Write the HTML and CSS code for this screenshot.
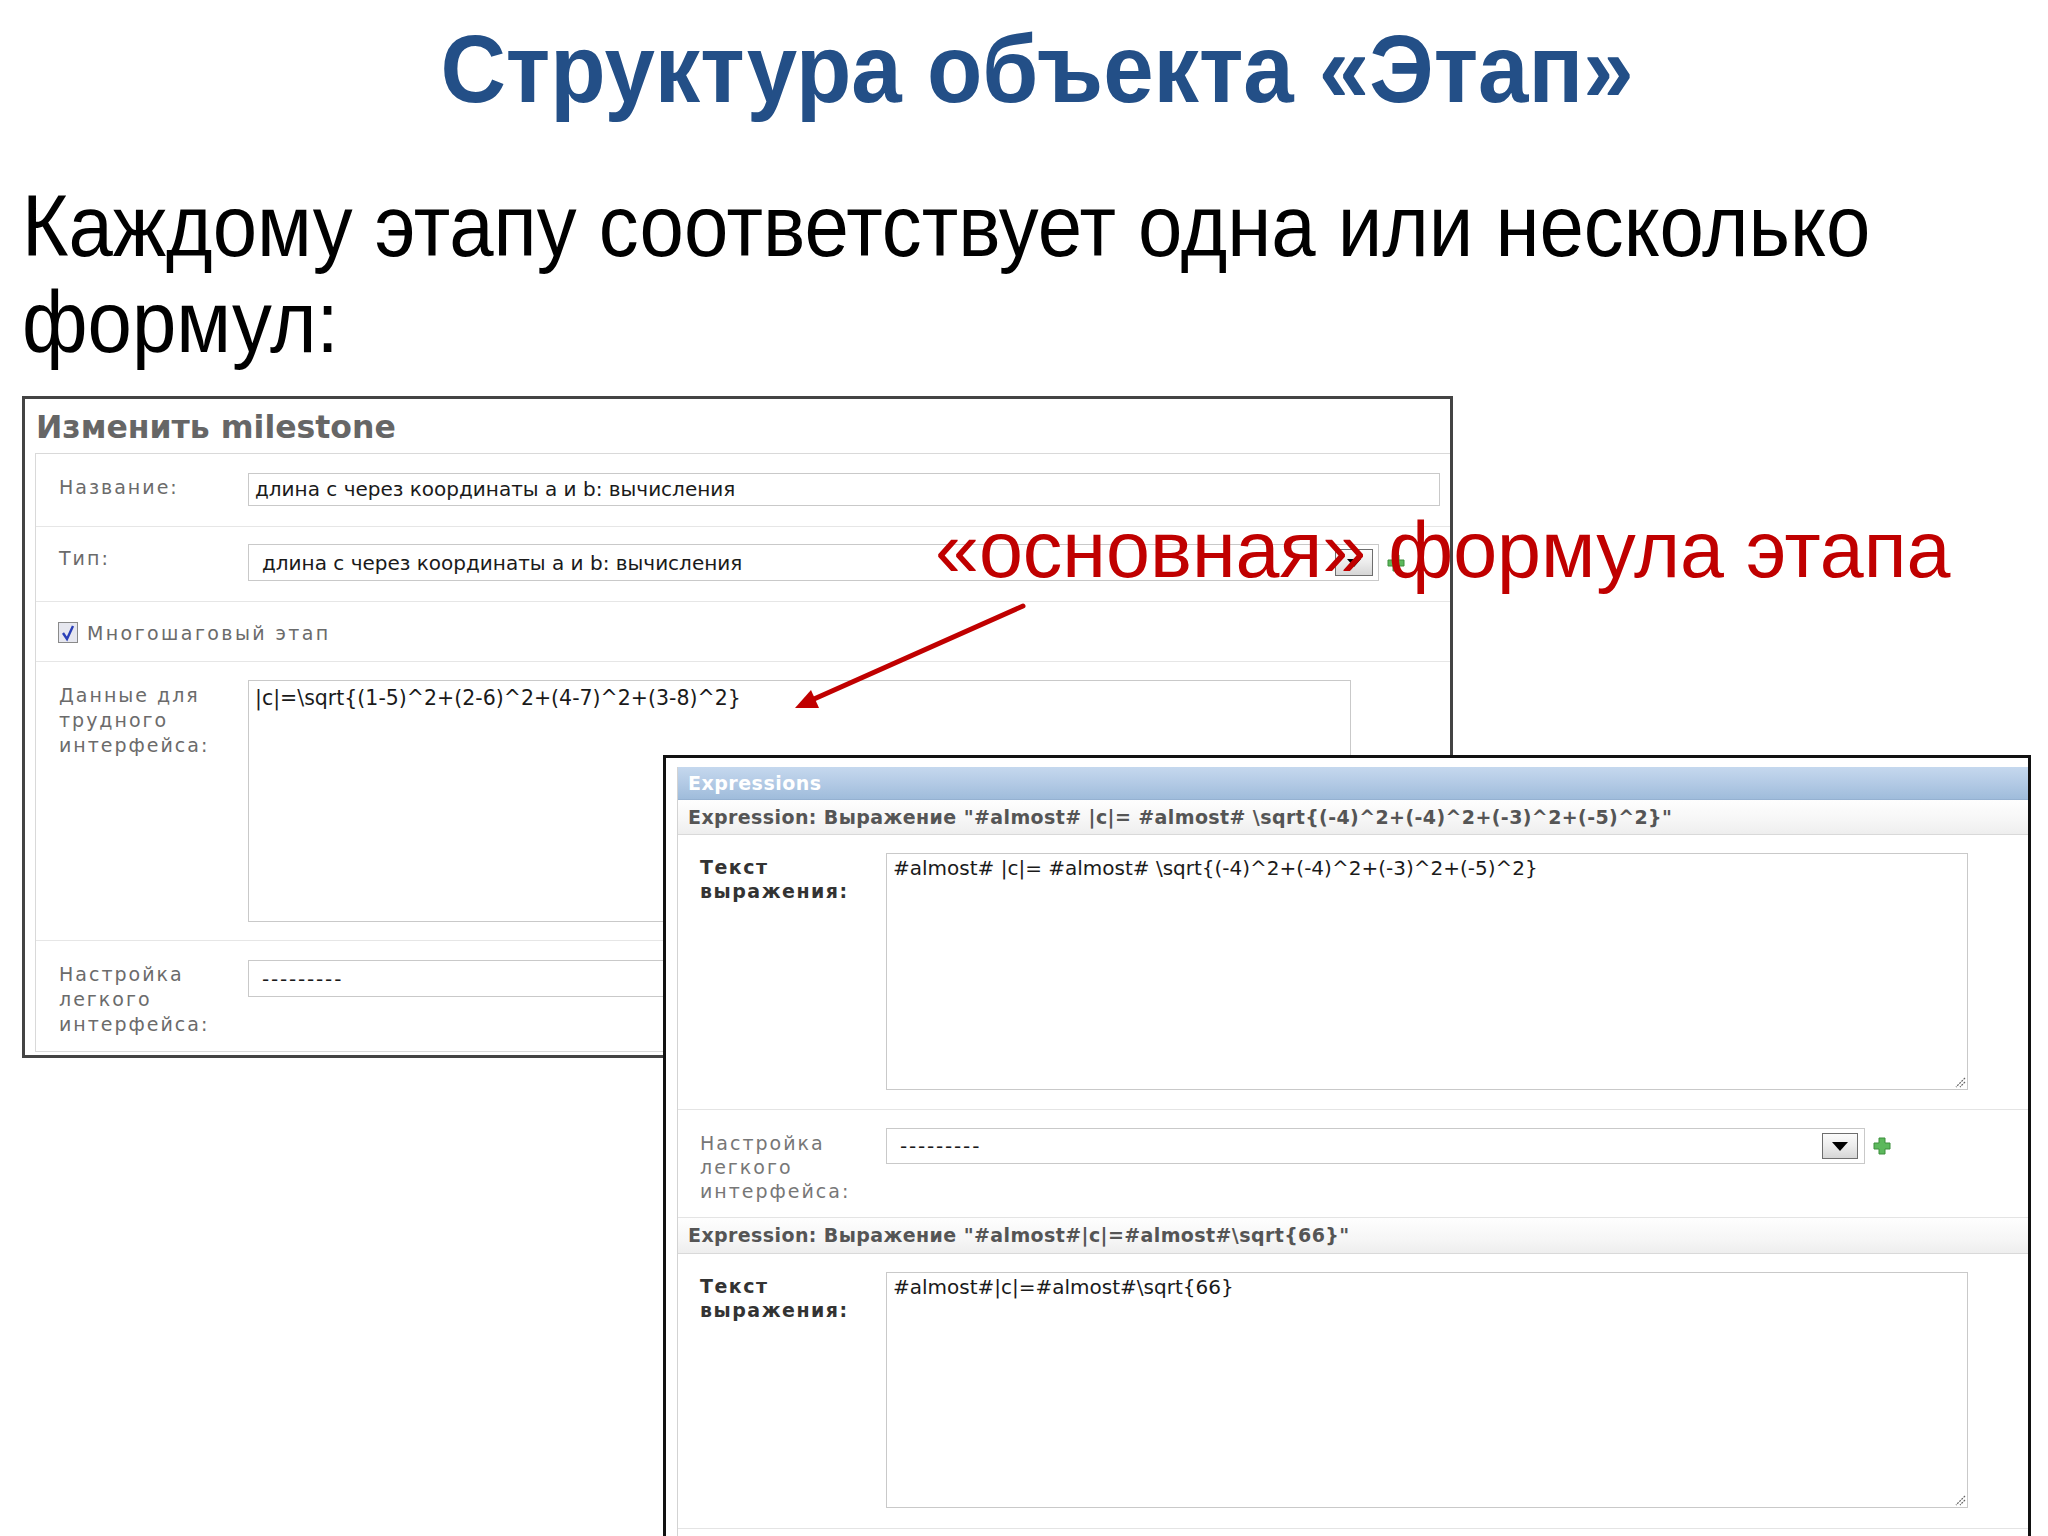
FILE: index.html
```html
<!DOCTYPE html>
<html lang="ru">
<head>
<meta charset="utf-8">
<title>Структура объекта «Этап»</title>
<link rel="stylesheet" href="styles.css">
</head>
<body>
<div class="slide">
  <h1 class="title"><span class="title-text">Структура объекта «Этап»</span></h1>
  <p class="lead"><span class="lead-text">Каждому этапу соответствует одна или несколько<br>формул:</span></p>
  <div class="stage">
    <section class="win win-milestone">
      <h2 class="win-title">Изменить milestone</h2>
      <div class="form">
        <div class="row row-name">
          <div class="label">Название:</div>
          <div class="field"><div class="input">длина с через координаты а и b: вычисления</div></div>
        </div>
        <div class="row row-type">
          <div class="label">Тип:</div>
          <div class="field field-select">
            <div class="select select-type"><span class="select-text">длина с через координаты а и b: вычисления</span><span class="dd-btn"><svg width="14" height="8" viewBox="0 0 14 8"><polygon points="0,0 14,0 7,8" fill="#000"/></svg></span></div>
            <svg class="plus" width="18" height="18" viewBox="0 0 18 18"><path d="M6 1h6v5h5v6h-5v5H6v-5H1V6h5z" fill="#5cb85c" stroke="#3d8f3d" stroke-width="1"/></svg>
          </div>
        </div>
        <div class="row row-check">
          <span class="checkbox"><svg width="20" height="21" viewBox="0 0 20 21"><rect x="0.5" y="0.5" width="19" height="20" fill="#e6e7ef" stroke="#8a8a8a"/><path d="M5 11 L9 17 L15 4" fill="none" stroke="#2a3fb8" stroke-width="2.4"/></svg></span>
          <span class="check-label">Многошаговый этап</span>
        </div>
        <div class="row row-hard">
          <div class="label">Данные для<br>трудного<br>интерфейса:</div>
          <div class="field"><div class="textarea ta-hard">|c|=\sqrt{(1-5)^2+(2-6)^2+(4-7)^2+(3-8)^2}</div></div>
        </div>
        <div class="row row-easy">
          <div class="label">Настройка<br>легкого<br>интерфейса:</div>
          <div class="field"><div class="select select-easy"><span class="select-text dashes">---------</span></div></div>
        </div>
      </div>
    </section>

    <div class="annotation">«основная» формула этапа</div>
    <svg class="arrow" width="2048" height="1166" viewBox="0 0 2048 1166">
      <line x1="1023" y1="236" x2="814" y2="329" stroke="#c00000" stroke-width="5" stroke-linecap="round"/>
      <polygon points="795,338 819,338 811,320" fill="#c00000"/>
    </svg>

    <section class="win win-expr">
      <div class="expr-box">
        <div class="bar">Expressions</div>
        <div class="subhead">Expression: Выражение "#almost# |c|= #almost# \sqrt{(-4)^2+(-4)^2+(-3)^2+(-5)^2}"</div>
        <div class="erow erow-text">
          <div class="elabel">Текст<br>выражения:</div>
          <div class="field"><div class="textarea ta-expr">#almost# |c|= #almost# \sqrt{(-4)^2+(-4)^2+(-3)^2+(-5)^2}<svg class="grip" width="12" height="12" viewBox="0 0 12 12"><path d="M11 2 L2 11 M11 6 L6 11" stroke="#666" stroke-width="1.2" stroke-dasharray="2 1"/></svg></div></div>
        </div>
        <div class="erow erow-easy">
          <div class="glabel">Настройка<br>легкого<br>интерфейса:</div>
          <div class="field field-select">
            <div class="select select-expr"><span class="select-text dashes">---------</span><span class="dd-btn dd-expr"><svg width="16" height="9" viewBox="0 0 16 9"><polygon points="0,0 16,0 8,9" fill="#000"/></svg></span></div>
            <svg class="plus" width="18" height="18" viewBox="0 0 18 18"><path d="M6 1h6v5h5v6h-5v5H6v-5H1V6h5z" fill="#5cb85c" stroke="#3d8f3d" stroke-width="1"/></svg>
          </div>
        </div>
        <div class="subhead subhead-2">Expression: Выражение "#almost#|c|=#almost#\sqrt{66}"</div>
        <div class="erow erow-text erow-last">
          <div class="elabel">Текст<br>выражения:</div>
          <div class="field"><div class="textarea ta-expr ta-expr2">#almost#|c|=#almost#\sqrt{66}<svg class="grip" width="12" height="12" viewBox="0 0 12 12"><path d="M11 2 L2 11 M11 6 L6 11" stroke="#666" stroke-width="1.2" stroke-dasharray="2 1"/></svg></div></div>
        </div>
        <div class="erow erow-tail"></div>
      </div>
    </section>
  </div>
</div>
</body>
</html>
```

FILE: styles.css
```css
html, body {
  margin: 0;
  padding: 0;
  background: #ffffff;
}

.slide {
  width: 2048px;
  height: 1536px;
  overflow: hidden;
  display: flex;
  flex-direction: column;
  background: #ffffff;
}

.title {
  margin: 14px 0 0;
  padding-left: 26px;
  text-align: center;
  font-family: "Liberation Sans", Arial, sans-serif;
  font-weight: bold;
  font-size: 96px;
  line-height: 110px;
  color: #234f87;
  white-space: nowrap;
}

.title-text {
  display: inline-block;
  transform: scaleX(0.944);
  transform-origin: 50% 50%;
}

.lead {
  margin: 54px 0 0;
  padding-left: 22px;
  height: 192px;
  font-family: "Liberation Sans", Arial, sans-serif;
  font-size: 88px;
  line-height: 96px;
  color: #000000;
  white-space: nowrap;
}

.lead-text {
  display: inline-block;
  transform: scaleX(0.906);
  transform-origin: 0 0;
}

.stage {
  position: relative;
  flex: 1;
}

/* ---------- window 1 ---------- */
.win {
  box-sizing: border-box;
  background: #ffffff;
  font-family: "DejaVu Sans", Verdana, sans-serif;
}

.win-milestone {
  margin: 26px 0 0 22px;
  width: 1431px;
  border: 3px solid #444444;
  padding: 0 0 3px 10px;
}

.win-title {
  margin: 0;
  height: 54px;
  box-sizing: border-box;
  padding: 4px 0 0 1px;
  font-size: 31.5px;
  line-height: 48px;
  font-weight: bold;
  color: #666666;
}

.form {
  border: 1px solid #d9d9d9;
  border-right: 0;
}

.row {
  display: grid;
  grid-template-columns: 212px 1fr;
  border-bottom: 1px solid #e6e6e6;
  box-sizing: border-box;
}

.row:last-child {
  border-bottom: 0;
}

.label {
  padding-left: 23px;
  font-size: 19px;
  line-height: 25px;
  letter-spacing: 2px;
  color: #6b6b6b;
}

.row-name { height: 73px; }
.row-name .label { padding-top: 21px; }
.row-name .field { padding-top: 19px; }

.input {
  box-sizing: border-box;
  width: 1192px;
  height: 33px;
  border: 1px solid #c9c9c9;
  padding-left: 6px;
  font-size: 20px;
  line-height: 31px;
  color: #1a1a1a;
  white-space: nowrap;
}

.row-type { height: 75px; }
.row-type .label { padding-top: 19px; }

.field-select {
  display: flex;
  align-items: center;
  align-self: start;
  margin-top: 17px;
}

.select {
  box-sizing: border-box;
  display: flex;
  align-items: center;
  border: 1px solid #c9c9c9;
  background: #ffffff;
  font-size: 20px;
  color: #1a1a1a;
  white-space: nowrap;
}

.select-text {
  flex: 1;
  padding-left: 13px;
}

.dashes {
  letter-spacing: 1.8px;
}

.select-type {
  width: 1131px;
  height: 37px;
}

.dd-btn {
  box-sizing: border-box;
  width: 38px;
  height: 27px;
  margin-right: 5px;
  border: 1px solid #6e6e6e;
  background: linear-gradient(#fbfbfb 0%, #ececec 50%, #d6d6d6 100%);
  display: flex;
  align-items: center;
  justify-content: center;
}

.plus {
  margin-left: 8px;
  flex: none;
}

.row-check {
  height: 60px;
  display: flex;
  align-items: center;
  padding-left: 22px;
}

.checkbox {
  display: flex;
  margin-right: 9px;
  margin-top: 2px;
}

.check-label {
  font-size: 19px;
  letter-spacing: 2.4px;
  color: #6b6b6b;
  padding-top: 2px;
}

.row-hard { height: 279px; }
.row-hard .label { padding-top: 21px; }
.row-hard .field { padding-top: 18px; }

.textarea {
  position: relative;
  box-sizing: border-box;
  border: 1px solid #c9c9c9;
  background: #ffffff;
  font-size: 20px;
  line-height: 25px;
  color: #1a1a1a;
  white-space: nowrap;
}

.ta-hard {
  width: 1103px;
  height: 242px;
  padding: 5px 0 0 6px;
  font-size: 20.5px;
}

.row-easy { height: 110px; }
.row-easy .label { padding-top: 21px; }
.row-easy .field { padding-top: 19px; }

.select-easy {
  width: 1131px;
  height: 37px;
}

/* ---------- annotation ---------- */
.annotation {
  position: absolute;
  left: 935px;
  top: 140px;
  font-family: "Liberation Sans", Arial, sans-serif;
  font-size: 79px;
  line-height: 80px;
  color: #c00000;
  white-space: nowrap;
  z-index: 2;
}

.arrow {
  position: absolute;
  left: 0;
  top: 0;
  z-index: 2;
  pointer-events: none;
}

/* ---------- window 2 ---------- */
.win-expr {
  position: absolute;
  left: 663px;
  top: 385px;
  width: 1368px;
  height: 900px;
  border: 3px solid #111111;
  padding: 9px 0 0 11px;
  z-index: 3;
}

.expr-box {
  border-left: 1px solid #d3d3d3;
}

.bar {
  box-sizing: border-box;
  height: 33px;
  padding-left: 10px;
  background: linear-gradient(#c5d8ee 0%, #b3cae5 50%, #9fbcdb 100%);
  border-bottom: 1px solid #95b1d1;
  font-size: 19px;
  font-weight: bold;
  line-height: 32px;
  color: #ffffff;
  letter-spacing: 0.5px;
}

.subhead {
  height: 35px;
  box-sizing: border-box;
  padding-left: 10px;
  background: linear-gradient(#fefefe 0%, #f6f6f6 60%, #eeeeee 100%);
  border-bottom: 1px solid #d9d9d9;
  font-size: 19px;
  font-weight: bold;
  line-height: 34px;
  color: #555555;
  white-space: nowrap;
  letter-spacing: 0.4px;
}

.subhead-2 {
  height: 36px;
  line-height: 35px;
}

.erow {
  display: grid;
  grid-template-columns: 208px 1fr;
  box-sizing: border-box;
  border-bottom: 1px solid #e4e4e4;
}

.elabel {
  padding: 20px 0 0 22px;
  font-size: 19px;
  line-height: 24px;
  font-weight: bold;
  letter-spacing: 1.5px;
  color: #333333;
}

.glabel {
  padding: 21px 0 0 22px;
  font-size: 19px;
  line-height: 24px;
  letter-spacing: 2px;
  color: #777777;
}

.erow-text { height: 275px; }
.erow-text .field { padding-top: 18px; }

.ta-expr {
  width: 1082px;
  height: 237px;
  padding: 2px 0 0 6px;
  font-size: 20px;
}

.ta-expr2 {
  height: 236px;
}

.grip {
  position: absolute;
  right: 1px;
  bottom: 1px;
}

.erow-easy { height: 108px; }
.erow-easy .field-select { margin-top: 18px; }

.select-expr {
  width: 979px;
  height: 36px;
}

.dd-expr {
  width: 36px;
  height: 26px;
  margin-right: 6px;
}

.erow-tail {
  height: 40px;
  border-bottom: 0;
}
```
